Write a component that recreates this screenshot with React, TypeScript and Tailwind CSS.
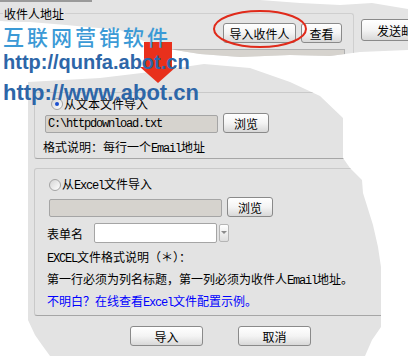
import React from "react";

const M = ({ children }: { children: React.ReactNode }) => (
  <span className="font-['Liberation_Mono',monospace] tracking-[-1.2px]">{children}</span>
);

function Radio({ checked }: { checked?: boolean }) {
  return (
    <span className="w-[12px] h-[12px] rounded-full border border-[#a3a3a3] bg-linear-to-br from-[#d5d5d5] to-white flex items-center justify-center shrink-0">
      {checked && <span className="w-[4px] h-[4px] rounded-full bg-[#1a4fd0]" />}
    </span>
  );
}

const btnBase =
  "h-[20px] rounded-[3px] border border-[#8a8a8a] bg-linear-to-b from-white via-[#f4f4f4] to-[#d8d8d8] flex items-center text-[12px] leading-[13px] text-black shrink-0 whitespace-nowrap ";

function Btn({ children, className = "" }: { children: React.ReactNode; className?: string }) {
  return <div className={btnBase + "justify-center " + className}>{children}</div>;
}

export default function App() {
  return (
    <div className="relative w-[408px] h-[356px] bg-white overflow-hidden font-['Noto_Sans_CJK_SC',sans-serif] text-[12px] leading-[13px] text-black">
      {/* top strip (main window fragment) */}
      <div className="absolute left-0 top-0 w-[408px] h-[62px] bg-[#e4e4e4] overflow-hidden [clip-path:polygon(0_0,260px_0,300px_3px,340px_5px,372px_3px,408px_9px,408px_50px,360px_52px,330px_56px,290px_55px,240px_57px,200px_54px,175px_50px,150px_44px,120px_30px,66px_25px,30px_22px,0_21px)]">
        <div className="h-[2px] w-[92px] bg-[#9a9a9a]" />
        <div className="flex items-start">
          <div className="relative ml-[-10px] mt-[11px] w-[364px] h-[60px] shrink-0 border-t border-r border-[#cfcfcf] rounded-tr-[3px] flex flex-col">
            <div className="absolute left-[13px] top-[-8px] px-[1px] bg-[#e4e4e4] whitespace-nowrap leading-[16px]">收件人地址</div>
            <div className="flex gap-[5px] mt-[9px] ml-[233px]">
              <Btn className="w-[73px]">导入收件人</Btn>
              <Btn className="w-[41px]">查看</Btn>
            </div>
            <div className="mt-[6px] w-[355px] h-[20px] bg-[#d6d3ce] border-t border-r border-[#b0b0b0]" />
          </div>
          <div className={btnBase + "ml-[7px] mt-[17px] w-[70px] justify-start pl-[15px] h-[22px]"}>发送邮件</div>
        </div>
      </div>

      {/* dialog fragment */}
      <div className="absolute left-[28px] top-[60px] w-[360px] h-[296px] bg-[#e3e3e3] overflow-hidden [clip-path:polygon(0_22px,72px_18px,122px_12px,176px_4px,222px_8px,262px_22px,292px_36px,315px_58px,315px_98px,322px_108px,334px_120px,335px_133px,345px_165px,350px_187px,353px_207px,353px_267px,344px_280px,337px_296px,22px_296px,14px_285px,7px_275px,0_260px)] flex flex-col">
        {/* group 1 */}
        <div className="ml-[6px] mt-[32px] w-[370px] shrink-0 border border-[#c9c9c9] border-b-[#a6a6a6] rounded-[3px] flex flex-col pb-[5px]">
          <div className="flex items-center h-[13px] mt-[4px] ml-[16px] gap-[1px]">
            <Radio checked />
            <span>从文本文件导入</span>
          </div>
          <div className="flex items-end h-[20px] mt-[3px] ml-[10px]">
            <div className="w-[173px] h-[18px] bg-[#d6d3ce] border border-[#a5a5a5] rounded-[2px] flex items-center pl-[2px]">
              <M>C:\httpdownload.txt</M>
            </div>
            <Btn className="ml-[5px] w-[46px]">浏览</Btn>
          </div>
          <div className="mt-[7px] ml-[8px] h-[13px] whitespace-nowrap">
            格式说明：每行一个<M>Email</M>地址
          </div>
        </div>
        {/* group 2 */}
        <div className="ml-[6px] mt-[9px] w-[370px] shrink-0 border border-[#c9c9c9] border-b-[#a6a6a6] rounded-[3px] flex flex-col pb-[8px]">
          <div className="flex items-center h-[13px] mt-[9px] ml-[14px] gap-[1px]">
            <Radio />
            <span>
              从<M>Excel</M>文件导入
            </span>
          </div>
          <div className="flex items-end h-[20px] mt-[6px] ml-[14px]">
            <div className="w-[173px] h-[18px] bg-[#d6d3ce] border border-[#a5a5a5] rounded-[2px]" />
            <Btn className="ml-[5px] w-[46px]">浏览</Btn>
          </div>
          <div className="flex items-center h-[20px] mt-[6px] ml-[12px]">
            <span className="w-[47px]">表单名</span>
            <div className="w-[123px] h-[20px] bg-white border border-[#a5a5a5] rounded-[2px]" />
            <div className="ml-[2px] w-[10px] h-[18px] border border-[#b5b5b5] rounded-[2px] bg-linear-to-b from-white to-[#dedede] flex items-center justify-center">
              <svg width="6" height="4" viewBox="0 0 6 4">
                <path d="M0 0h6L3 3z" fill="#8a8a8a" />
              </svg>
            </div>
          </div>
          <div className="mt-[7px] ml-[12px] h-[13px] whitespace-nowrap">
            <M>EXCEL</M>文件格式说明（＊）：
          </div>
          <div className="mt-[9px] ml-[12px] h-[13px] whitespace-nowrap">
            第一行必须为列名标题，第一列必须为收件人<M>Email</M>地址。
          </div>
          <div className="mt-[9px] ml-[12px] h-[13px] text-[#0000ff] whitespace-nowrap">
            不明白？在线查看<M>Excel</M>文件配置示例。
          </div>
        </div>
        <div className="flex mt-[10px] ml-[102px] gap-[35px]">
          <Btn className="w-[73px]">导入</Btn>
          <Btn className="w-[73px]">取消</Btn>
        </div>
      </div>

      {/* red arrow */}
      <svg className="absolute left-[140px] top-[42px]" width="36" height="42" viewBox="0 0 36 42">
        <path d="M4 0H32V25H36L18 41L0 25H4Z" fill="#e8301c" />
      </svg>

      {/* red ellipse */}
      <svg className="absolute left-[211px] top-[8px]" width="98" height="42" viewBox="0 0 98 42">
        <ellipse cx="49" cy="21" rx="46" ry="18" fill="none" stroke="#e02a1a" strokeWidth="2" />
      </svg>

      {/* overlay texts */}
      <div className="absolute left-[3px] top-[22px] text-[21px] leading-[28px] tracking-[3px] text-[#3b9ad6] font-medium whitespace-nowrap">
        互联网营销软件
      </div>
      <div className="absolute left-[3px] top-[50px] font-['Liberation_Sans',sans-serif] font-bold text-[20px] leading-[24px] text-[#2d66a8] whitespace-nowrap">
        http://qunfa.abot.cn
      </div>
      <div className="absolute left-[3px] top-[80px] font-['Liberation_Sans',sans-serif] font-bold text-[22px] leading-[26px] text-[#2d66a8] whitespace-nowrap">
        http://www.abot.cn
      </div>
    </div>
  );
}
